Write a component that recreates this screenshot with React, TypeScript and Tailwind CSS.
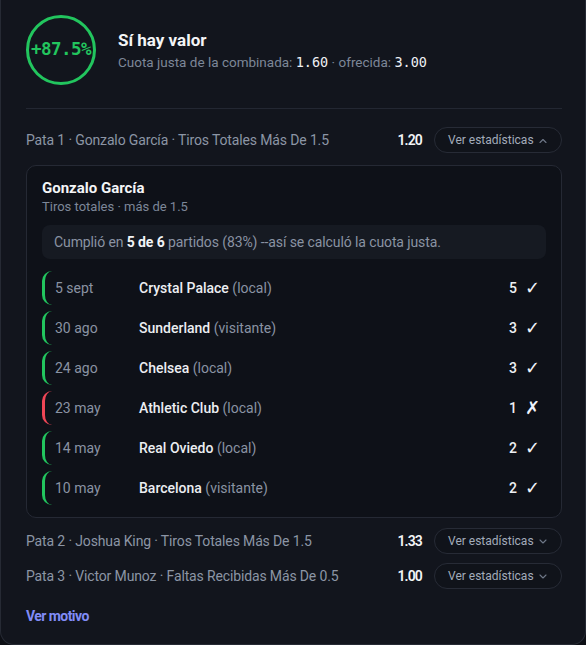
const games = [
  { date: '5 sept', team: 'Crystal Palace', side: 'local', value: 5, hit: true },
  { date: '30 ago', team: 'Sunderland', side: 'visitante', value: 3, hit: true },
  { date: '24 ago', team: 'Chelsea', side: 'local', value: 3, hit: true },
  { date: '23 may', team: 'Athletic Club', side: 'local', value: 1, hit: false },
  { date: '14 may', team: 'Real Oviedo', side: 'local', value: 2, hit: true },
  { date: '10 may', team: 'Barcelona', side: 'visitante', value: 2, hit: true },
];

function Chevron({ up }: { up?: boolean }) {
  return (
    <svg width="8" height="5" viewBox="0 0 8 5" fill="none" className="text-[#6f7888]">
      <path
        d={up ? 'M1 4.5L4 1.5L7 4.5' : 'M1 1L4 4L7 1'}
        stroke="currentColor"
        strokeWidth="1.1"
        strokeLinecap="round"
        strokeLinejoin="round"
      />
    </svg>
  );
}

function LegRow({ label, odds, open }: { label: string; odds: string; open?: boolean }) {
  return (
    <div className="flex items-center justify-between">
      <span className="text-[14px] text-[#8c95a5] tracking-[-0.01em]">{label}</span>
      <div className="flex items-center gap-3">
        <span className="text-[14px] font-semibold text-[#f2f4f7] tracking-[-0.06em]">{odds}</span>
        <button className="flex items-center justify-between w-[128px] h-[26px] pl-[13px] pr-[14px] rounded-full border border-[#272b36] bg-[#10131a] text-[12px] text-[#a3acba]">
          Ver estadísticas
          <Chevron up={open} />
        </button>
      </div>
    </div>
  );
}

export default function App() {
  return (
    <div className="w-[586px] h-[645px] bg-[#0d0f15] font-['Roboto',sans-serif]">
      <div className="h-[645px] bg-[#12151d] border border-t-0 border-[#262a34] rounded-b-[14px] pl-[25px] pr-[23px] pt-[15px]">
        <div className="flex items-center gap-[22px]">
          <div className="w-[70px] h-[70px] rounded-full border-[3px] border-[#22c55e] flex items-center justify-center shrink-0">
            <span className="font-['DejaVu_Sans_Mono',monospace] font-bold text-[17.5px] text-[#22c55e] tracking-[-0.03em] leading-none">
              +87.5%
            </span>
          </div>
          <div className="flex flex-col gap-[3px]">
            <span className="text-[17px] font-bold text-[#f4f5f7] leading-[20px]">Sí hay valor</span>
            <span className="text-[13.5px] text-[#7d8798] leading-[18px]">
              Cuota justa de la combinada:{' '}
              <span className="font-['DejaVu_Sans_Mono',monospace] text-[13.5px] text-[#eef0f4]">1.60</span>
              {' · '}ofrecida:{' '}
              <span className="font-['DejaVu_Sans_Mono',monospace] text-[13.5px] text-[#eef0f4]">3.00</span>
            </span>
          </div>
        </div>

        <div className="mt-[23px] h-px bg-[#232732]" />

        <div className="mt-[18px] flex flex-col">
          <LegRow label="Pata 1 · Gonzalo García · Tiros Totales Más De 1.5" odds="1.20" open />

          <div className="mt-[12px] rounded-[10px] border border-[#252934] bg-[#0e1118] px-[15px] pt-[13px] pb-[12px]">
            <div className="text-[15px] font-bold text-[#f4f5f7] leading-[18px]">Gonzalo García</div>
            <div className="text-[13px] text-[#7d8798] leading-[18px] mt-[1px]">Tiros totales · más de 1.5</div>

            <div className="mt-[9px] h-[34px] rounded-[8px] bg-[#161a22] px-3 flex items-center text-[14px] text-[#8a93a3] tracking-[-0.1px]">
              <span>
                Cumplió en <b className="text-[#f2f4f7] font-bold">5 de 6</b> partidos (83%) --así se calculó la cuota justa.
              </span>
            </div>

            <div className="mt-[12px] flex flex-col gap-[6px]">
              {games.map((g) => (
                <div
                  key={g.date}
                  className={`h-[34px] flex items-center rounded-l-[10px] border-l-[3px] pl-[10px] pr-[8px] ${
                    g.hit ? 'border-[#22c55e]' : 'border-[#ef4656]'
                  }`}
                >
                  <span className="w-[84px] text-[14px] text-[#8a93a3]">{g.date}</span>
                  <span className="flex-1 text-[14px] font-medium text-[#eceef2]">
                    {g.team} <span className="font-normal text-[#8a93a3]">({g.side})</span>
                  </span>
                  <span className="text-[14px] font-medium text-[#eef0f4]">{g.value}</span>
                  <span className="ml-[8px] w-[13px] text-center font-['DejaVu_Sans',sans-serif] text-[18px] leading-none text-[#eef3fb]">
                    {g.hit ? '✓' : '✗'}
                  </span>
                </div>
              ))}
            </div>
          </div>

          <div className="mt-[10px] flex flex-col gap-[9px]">
            <LegRow label="Pata 2 · Joshua King · Tiros Totales Más De 1.5" odds="1.33" />
            <LegRow label="Pata 3 · Victor Munoz · Faltas Recibidas Más De 0.5" odds="1.00" />
          </div>
        </div>

        <div className="mt-[18px] text-[14px] font-bold text-[#818cf8] tracking-[-0.04em] leading-[18px]">Ver motivo</div>
      </div>
    </div>
  );
}
